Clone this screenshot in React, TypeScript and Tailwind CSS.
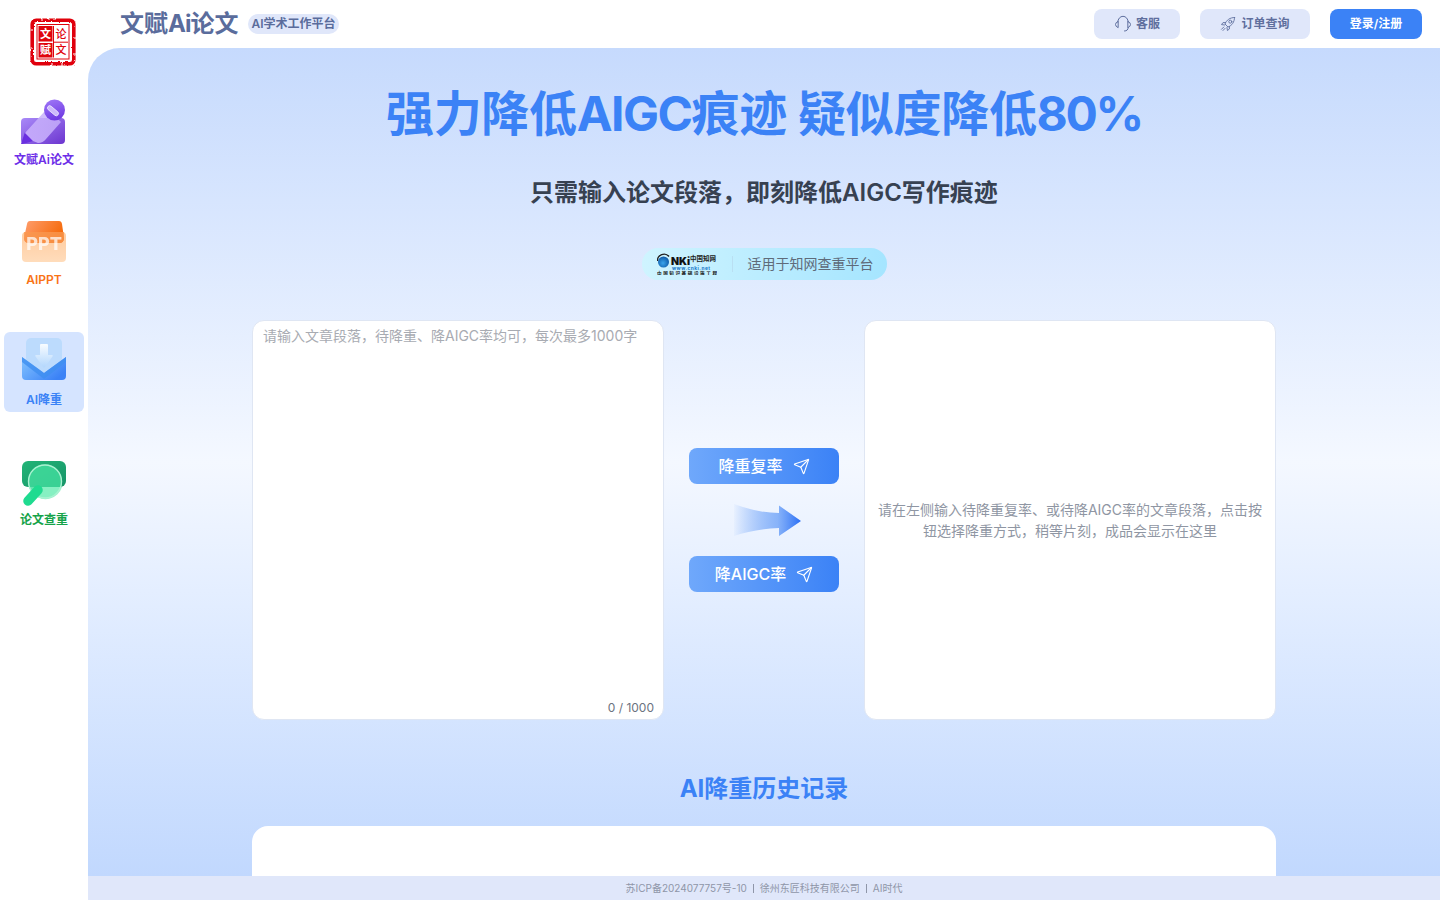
import React from 'react';
import { Send } from 'lucide-react';

const FONT = "font-['Inter','Noto_Sans_CJK_SC',sans-serif]";

const SealLogo = () => (
  <svg width="46" height="48" viewBox="0 0 46 48">
    <defs>
      <filter id="rough" x="-5%" y="-5%" width="110%" height="110%">
        <feTurbulence type="fractalNoise" baseFrequency="0.35" numOctaves="2" seed="4" />
        <feDisplacementMap in="SourceGraphic" scale="2.400" />
      </filter>
    </defs>
    <g filter="url(#rough)">
      <rect x="2.200" y="2.200" width="41.600" height="43.600" rx="4" fill="none" stroke="#e0040c" strokeWidth="3.600" />
      <path d="M0.500 12 L3 12 M0.500 30 L3 30 M43 20 L46 20 M43 36 L46 36 M12 0.500 L12 3 M32 45 L32 48 M22 45 L22 47" stroke="#fff" strokeWidth="1" />
    </g>
    <rect x="7" y="6.500" width="32" height="34.500" fill="none" stroke="#e0040c" strokeWidth="1" />
    <rect x="8.500" y="8" width="14" height="15.500" fill="#e0040c" />
    <rect x="8.500" y="25" width="14" height="14.500" fill="#e0040c" />
    <path d="M23.500 8 L23.500 39.500 M23.500 24.200 L38 24.200" stroke="#e0040c" strokeWidth="1" />
    <text x="15.500" y="20" textAnchor="middle" fontSize="11" fontWeight="700" fill="#fff" fontFamily="Noto Sans CJK SC">文</text>
    <text x="31" y="20" textAnchor="middle" fontSize="11" fontWeight="500" fill="#e0040c" fontFamily="Noto Sans CJK SC">论</text>
    <text x="15.500" y="36" textAnchor="middle" fontSize="11" fontWeight="700" fill="#fff" fontFamily="Noto Sans CJK SC">赋</text>
    <text x="31" y="36" textAnchor="middle" fontSize="11" fontWeight="500" fill="#e0040c" fontFamily="Noto Sans CJK SC">文</text>
  </svg>
);

const PenIcon = () => (
  <svg width="48" height="48" viewBox="0 0 48 48">
    <defs>
      <linearGradient id="penBase" x1="0" y1="0" x2="1" y2="1">
        <stop offset="0" stopColor="#a98af8" />
        <stop offset="1" stopColor="#6c35cf" />
      </linearGradient>
      <linearGradient id="penBody" x1="0" y1="1" x2="1" y2="0">
        <stop offset="0" stopColor="#c4a8fb" />
        <stop offset="1" stopColor="#c9b4fb" stopOpacity="0.75" />
      </linearGradient>
      <linearGradient id="penCap" x1="0.300" y1="0" x2="0.600" y2="1">
        <stop offset="0" stopColor="#9d74f6" />
        <stop offset="1" stopColor="#6d37e2" />
      </linearGradient>
    </defs>
    <rect x="1" y="20" width="44" height="26" rx="4" fill="url(#penBase)" />
    <path d="M1 46 L5 34 L13 43 L3 46 Z" fill="#6a2fe0" />
    <path d="M5 35 L24 14 Q27 11 30 13 L41 24 L26 41 Q23 45 18 45 L13 43 Z" fill="url(#penBody)" />
    <circle cx="34.500" cy="12" r="10.500" fill="url(#penCap)" />
    <rect x="26.500" y="10.500" width="13" height="4.500" rx="2.200" transform="rotate(40 33 12.700)" fill="#cdbafb" stroke="#efe8ff" strokeWidth="0.800" />
  </svg>
);

const PptIcon = () => (
  <svg width="48" height="48" viewBox="0 0 48 48">
    <defs>
      <linearGradient id="pptTop" x1="0" y1="0" x2="1" y2="0.400">
        <stop offset="0" stopColor="#ff9e6e" />
        <stop offset="1" stopColor="#f56a0a" />
      </linearGradient>
      <linearGradient id="pptBase" x1="0" y1="0" x2="0" y2="1">
        <stop offset="0" stopColor="#ffcb9e" />
        <stop offset="1" stopColor="#ffdcbb" />
      </linearGradient>
    </defs>
    <rect x="2" y="14" width="44" height="30" rx="4" fill="url(#pptBase)" />
    <path d="M7 6 Q7.500 3 10 3 L39 3 Q41.500 3 42 6 L44 20 Q44 25 39 25 L9 25 Q4 25 4 20 Z" fill="url(#pptTop)" />
    <path d="M4 14 L44 14 L44 20 Q44 25 39 25 L9 25 Q4 25 4 20 Z" fill="#f9974f" opacity="0.8" />
    <text x="24" y="32" textAnchor="middle" fontSize="18" fontWeight="800" fill="#fff" opacity="0.72" fontFamily="Inter">PPT</text>
  </svg>
);

const MailIcon = () => (
  <svg width="48" height="48" viewBox="0 0 48 48">
    <defs>
      <linearGradient id="mailBase" x1="0" y1="0" x2="1" y2="0.600">
        <stop offset="0" stopColor="#84c4ff" />
        <stop offset="1" stopColor="#3b82f6" />
      </linearGradient>
      <linearGradient id="mailArrow" x1="0" y1="0" x2="0" y2="1">
        <stop offset="0" stopColor="#f8fcff" />
        <stop offset="1" stopColor="#b3d7fd" />
      </linearGradient>
    </defs>
    <rect x="6" y="0" width="36" height="34" rx="5" fill="#bcdbfd" />
    <path d="M2 19 L24 35 L46 19 L46 38 Q46 42 42 42 L6 42 Q2 42 2 38 Z" fill="url(#mailBase)" />
    <path d="M2 19 L24 35 L46 19 L46 24 L24 41 L2 24 Z" fill="#3f8ff0" opacity="0.8" />
    <path d="M20 7 Q20 6 21 6 L27 6 Q28 6 28 7 L28 17 L32 17 Q33.500 17 32.500 18.500 L25 29 Q24 30 23 29 L15.500 18.500 Q14.500 17 16 17 L20 17 Z" fill="url(#mailArrow)" />
  </svg>
);

const SearchIcon = () => (
  <svg width="48" height="48" viewBox="0 0 48 48">
    <defs>
      <linearGradient id="seaBase" x1="0" y1="0" x2="1" y2="1">
        <stop offset="0" stopColor="#22b477" />
        <stop offset="1" stopColor="#179468" />
      </linearGradient>
    </defs>
    <rect x="2" y="3" width="44" height="26" rx="6" fill="url(#seaBase)" />
    <circle cx="25" cy="23.500" r="17" fill="#42dd9d" opacity="0.82" />
    <path d="M42 29 A17.500 17.500 0 0 1 14 37 L22 29 Z" fill="#8cf2c6" opacity="0.85" />
    <circle cx="25" cy="23.500" r="16.500" fill="none" stroke="#a9f2d1" strokeWidth="1.400" />
    <path d="M8 43 L18 32" stroke="#1fdb90" strokeWidth="9.500" strokeLinecap="round" />
  </svg>
);

const HeadsetIcon = () => (
  <svg width="18" height="18" viewBox="0 0 18 18" fill="none" stroke="#5f6f9e" strokeWidth="1" strokeLinecap="round">
    <path d="M3.800 7 A5.200 5.700 0 0 1 14.200 7" />
    <path d="M3.800 6.500 Q1.500 7.500 1.500 9.500 Q1.500 11.500 3.800 12.500 Z" />
    <path d="M14.200 6.500 Q16.500 7.500 16.500 9.500 Q16.500 11.500 14.200 12.500 Z" />
    <path d="M14.200 12.500 Q14.200 16 10.500 16" />
  </svg>
);

const RocketIcon = () => (
  <svg width="16" height="16" viewBox="0 0 16 16" fill="none" stroke="#5f6f9e" strokeWidth="0.900" strokeLinecap="round" strokeLinejoin="round">
    <path d="M14.500 1.500 C10 1.500 6.500 4 5 8 L8 11 C12 9.500 14.500 6 14.500 1.500 Z" />
    <circle cx="10.300" cy="5.700" r="1.500" />
    <path d="M5.600 6.600 L3 6.600 L1.500 8.600 L4.600 9" />
    <path d="M9.400 10.400 L9.400 13 L7.400 14.500 L7 11.400" />
    <path d="M3.800 11 L1.500 13.300 M5 12.400 L3 14.500" />
  </svg>
);

const CnkiLogo = () => (
  <svg width="60" height="22" viewBox="0 0 60 22" className="shrink-0">
    <defs>
      <radialGradient id="globe" cx="0.450" cy="0.600" r="0.600">
        <stop offset="0" stopColor="#3aa5ec" />
        <stop offset="1" stopColor="#0d5aa8" />
      </radialGradient>
    </defs>
    <circle cx="6.500" cy="9" r="5.500" fill="url(#globe)" />
    <path d="M12 3.500 A6.500 6.500 0 0 0 0.500 8" fill="none" stroke="#222" strokeWidth="1.300" />
    <text x="14" y="12" fontSize="10.500" fontWeight="900" fill="#111" fontFamily="Inter">NKi</text>
    <text x="33" y="8" fontSize="6.500" fontWeight="700" fill="#222" fontFamily="Noto Sans CJK SC">中国知网</text>
    <text x="15" y="16.500" fontSize="4.800" fontWeight="700" fill="#1677c8" letterSpacing="0.500" fontFamily="Inter">www.cnki.net</text>
    <text x="0" y="21.500" fontSize="4.600" fontWeight="700" fill="#111" fontFamily="Noto Sans CJK SC" textLength="60">中国知识基础设施工程</text>
  </svg>
);

const BigArrow = () => (
  <svg width="68" height="32" viewBox="0 0 68 32" className="ml-2">
    <defs>
      <linearGradient id="bigArrow" x1="0" y1="0" x2="1" y2="0">
        <stop offset="0" stopColor="#3b82f6" stopOpacity="0.03" />
        <stop offset="0.650" stopColor="#6fa3f8" stopOpacity="0.800" />
        <stop offset="1" stopColor="#2a6ff5" />
      </linearGradient>
    </defs>
    <path d="M0 0 Q24 9 45 9 L45 1.500 L67 17 L45 32 L45 24 Q20 25 0 32 Z" fill="url(#bigArrow)" />
  </svg>
);

const NavItem = ({ icon, label, color, active }: { icon: React.ReactNode; label: string; color: string; active?: boolean }) => (
  <div className={`w-20 h-20 rounded-md flex flex-col items-center pt-[6px] ${active ? 'bg-[#d5e4ff]' : ''}`}>
    <div className="w-12 h-12 flex items-center justify-center">{icon}</div>
    <span className={`mt-[6px] text-xs leading-4 font-semibold whitespace-nowrap ${color}`}>{label}</span>
  </div>
);

const ActionButton = ({ label }: { label: string }) => (
  <button className="w-[150px] h-9 rounded-lg bg-gradient-to-r from-[#6fa8fb] to-[#3b82f6] text-white text-base font-medium flex items-center justify-center gap-[10px]">
    {label}
    <Send size={17} strokeWidth={1.6} />
  </button>
);

const App: React.FC = () => {
  return (
    <div className={`${FONT} flex h-screen w-full overflow-hidden bg-white`}>
      {/* Sidebar */}
      <aside className="w-[88px] shrink-0 flex flex-col items-center">
        <div className="h-[92px] w-full pt-[18px] pl-[30px]">
          <SealLogo />
        </div>
        <div className="flex flex-col gap-10">
          <NavItem icon={<PenIcon />} label="文赋Ai论文" color="text-[#6d2ee8]" />
          <NavItem icon={<PptIcon />} label="AIPPT" color="text-[#f97316]" />
          <NavItem icon={<MailIcon />} label="AI降重" color="text-[#3b82f6]" active />
          <NavItem icon={<SearchIcon />} label="论文查重" color="text-[#16a34a]" />
        </div>
      </aside>

      <div className="flex-1 min-w-0 flex flex-col">
        {/* Header */}
        <header className="h-12 shrink-0 flex items-center justify-between pl-8 pr-[18px]">
          <div className="flex items-center gap-[10px]">
            <span className="text-2xl font-bold text-[#5a6c9c]">文赋<span className="tracking-[-1px]">Ai</span>论文</span>
            <span className="h-5 px-[3px] rounded-full bg-[#e0e7fa] text-xs font-semibold text-[#5a6c9c] flex items-center">AI学术工作平台</span>
          </div>
          <div className="flex items-center gap-5">
            <button className="w-[86px] h-[30px] rounded-lg bg-[#e0e7fa] text-xs font-semibold text-[#5f6f9e] flex items-center justify-center gap-1">
              <HeadsetIcon />
              客服
            </button>
            <button className="w-[110px] h-[30px] rounded-lg bg-[#e0e7fa] text-xs font-semibold text-[#5f6f9e] flex items-center justify-center gap-[5px]">
              <RocketIcon />
              订单查询
            </button>
            <button className="w-[92px] h-[30px] rounded-lg bg-[#3b82f6] text-xs font-semibold text-white">登录/注册</button>
          </div>
        </header>

        {/* Main */}
        <main className="flex-1 min-h-0 overflow-hidden rounded-tl-[32px] bg-gradient-to-b from-[#c6dafd] via-[#f4f8ff] to-[#c1d8fe] flex flex-col items-center">
          <h1 className="mt-[33px] shrink-0 text-5xl leading-[66px] font-bold tracking-[-0.3px] text-[#3b82f6]">
            强力降低<span className="tracking-[-1.500px]">AIGC</span>痕迹 疑似度降低<span className="tracking-[-2.300px]">80%</span>
          </h1>
          <h2 className="mt-[30px] shrink-0 text-2xl leading-[32px] font-semibold text-[#374151]">只需输入论文段落，即刻降低AIGC写作痕迹</h2>
          <div className="mt-[39px] h-8 w-[245px] shrink-0 rounded-full bg-gradient-to-r from-[#cff4ff] to-[#a5e5ff] flex items-center pl-[15px]">
            <CnkiLogo />
            <span className="ml-[15px] mr-[15px] h-4 w-px bg-[#b9dff2]" />
            <span className="text-sm text-[#5f6b7a]">适用于知网查重平台</span>
          </div>

          <div className="mt-10 w-[1024px] shrink-0 flex items-stretch">
            <div className="relative w-[412px] h-[400px] rounded-xl bg-white border border-[#dfe6f3] px-[10px] py-[5px]">
              <p className="text-sm leading-5 text-[#a8abb2]">请输入文章段落，待降重、降AIGC率均可，每次最多1000字</p>
              <span className="absolute right-[9px] bottom-[1px] text-xs leading-5 text-[#6b7280]">0 / 1000</span>
            </div>
            <div className="flex-1 flex flex-col items-center justify-center">
              <ActionButton label="降重复率" />
              <div className="my-5 h-8 flex items-center"><BigArrow /></div>
              <ActionButton label="降AIGC率" />
            </div>
            <div className="w-[412px] h-[400px] rounded-xl bg-white border border-[#dfe6f3] px-3 flex items-center justify-center">
              <p className="text-sm leading-[21px] text-center text-[#8f96a3]">请在左侧输入待降重复率、或待降AIGC率的文章段落，点击按钮选择降重方式，稍等片刻，成品会显示在这里</p>
            </div>
          </div>

          <h3 className="mt-[53px] shrink-0 text-2xl leading-8 font-bold text-[#3b82f6]">AI降重历史记录</h3>
          <div className="mt-[21px] w-[1024px] h-[300px] shrink-0 rounded-t-2xl bg-white" />
        </main>

        {/* Footer */}
        <footer className="h-6 shrink-0 bg-[#e0e7fa] flex items-center justify-center text-[10px] text-[#8f96a8]">
          <span>苏ICP备2024077757号-10</span>
          <span className="mx-[6px] h-[9px] w-px bg-[#8f96a8]" />
          <span>徐州东匠科技有限公司</span>
          <span className="mx-[6px] h-[9px] w-px bg-[#8f96a8]" />
          <span>AI时代</span>
        </footer>
      </div>
    </div>
  );
};

export default App;
